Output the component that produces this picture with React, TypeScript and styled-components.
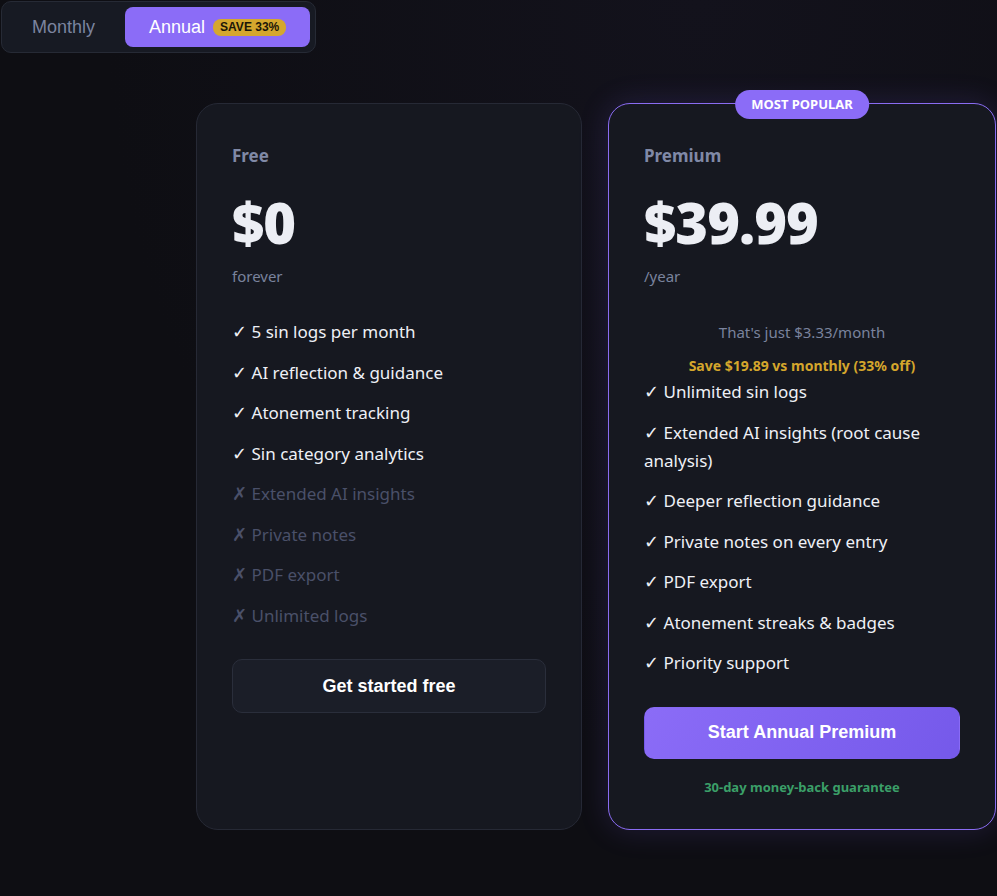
import React from "react";
import styled, { createGlobalStyle } from "styled-components";

const Global = createGlobalStyle`
  html, body { margin: 0; padding: 0; background: #0e0e13; }
  body { font-family: "Noto Sans", "Segoe UI", sans-serif; color: #e8e9f0; }
  * { box-sizing: border-box; }
`;

const Page = styled.div`
  min-height: 896px;
  background: radial-gradient(ellipse at 70% 0%, #13121c 0%, #0e0e13 60%);
  padding: 1px 0 0 1px;
`;

const Toggle = styled.div`
  display: inline-flex;
  align-items: center;
  gap: 8px;
  padding: 5px 5px;
  background: #171a23;
  border: 1px solid #262a35;
  border-radius: 10px;
  height: 52px;
`;

const ToggleBtn = styled.button<{ $active?: boolean }>`
  display: flex;
  align-items: center;
  gap: 8px;
  height: 40px;
  padding: ${(p) => (p.$active ? "0 24px 0 24px" : "0 22px 0 25px")};
  border: none;
  border-radius: 8px;
  font-family: "Liberation Sans", Arial, sans-serif;
  font-size: 18px;
  background: ${(p) => (p.$active ? "#8b6cf7" : "transparent")};
  color: ${(p) => (p.$active ? "#ffffff" : "#7b849f")};
`;

const SaveBadge = styled.span`
  background: #d5a72d;
  color: #1b1608;
  font-size: 12px;
  font-weight: 700;
  border-radius: 8px;
  padding: 2px 7px;
  line-height: 13px;
`;

const Grid = styled.div`
  display: grid;
  grid-template-columns: 386px 388px;
  gap: 26px;
  margin: 50px 0 0 195px;
`;

const Card = styled.div<{ $featured?: boolean }>`
  position: relative;
  height: 727px;
  padding: 40px 35px 0 35px;
  background: #161820;
  border: 1px solid ${(p) => (p.$featured ? "#8a6cf2" : "#262935")};
  border-radius: 22px;
  box-shadow: ${(p) => (p.$featured ? "0 0 30px rgba(124, 92, 240, 0.18)" : "none")};
  display: flex;
  flex-direction: column;
`;

const Popular = styled.div`
  position: absolute;
  top: -14px;
  left: 50%;
  transform: translateX(-50%);
  background: #8b6cf7;
  color: #fff;
  font-weight: 700;
  font-size: 13px;
  padding: 0 16px;
  height: 29px;
  line-height: 29px;
  border-radius: 15px;
  white-space: nowrap;
`;

const PlanName = styled.div`
  font-size: 17px;
  font-weight: 700;
  color: #8089a6;
  line-height: 24px;
`;

const Price = styled.div`
  font-size: 56px;
  font-weight: 900;
  color: #eceef4;
  line-height: 70px;
  margin-top: 19px;
  letter-spacing: -1px;
`;

const Period = styled.div`
  font-size: 15px;
  color: #7a839d;
  line-height: 20px;
  margin-top: 9px;
`;

const Note = styled.div`
  text-align: center;
  font-size: 15px;
  color: #7a839d;
  line-height: 20px;
  margin-top: 36px;
`;

const Save = styled.div`
  text-align: center;
  font-size: 14px;
  font-weight: 700;
  color: #d4a62c;
  line-height: 20px;
  margin-top: 14px;
  margin-bottom: -4px;
`;

const Features = styled.ul<{ $tight?: boolean }>`
  list-style: none;
  margin: ${(p) => (p.$tight ? "0" : "26px")} 0 0 0;
  padding: 0;
`;

const Feature = styled.li<{ $off?: boolean }>`
  font-size: 17px;
  line-height: 28px;
  padding: 6px 0 6.5px;
  color: ${(p) => (p.$off ? "#4a5069" : "#eef0f6")};
`;

const Mark = styled.span`
  font-family: "DejaVu Sans", sans-serif;
  font-size: 18px;
  line-height: 0;
`;

const Button = styled.button<{ $primary?: boolean }>`
  height: ${(p) => (p.$primary ? "52px" : "54px")};
  width: 100%;
  margin-top: 23px;
  border-radius: 10px;
  font-family: "Liberation Sans", Arial, sans-serif;
  font-size: 18px;
  font-weight: 700;
  color: #ffffff;
  border: 1px solid ${(p) => (p.$primary ? "transparent" : "#2a2e3b")};
  background: ${(p) =>
    p.$primary ? "linear-gradient(120deg, #8b6cf7 0%, #7559ea 100%)" : "#1b1e28"};
`;

const Guarantee = styled.div`
  text-align: center;
  font-size: 13px;
  font-weight: 700;
  color: #3b9f68;
  margin-top: 19px;
`;

const freeFeatures: [string, boolean][] = [
  ["5 sin logs per month", true],
  ["AI reflection & guidance", true],
  ["Atonement tracking", true],
  ["Sin category analytics", true],
  ["Extended AI insights", false],
  ["Private notes", false],
  ["PDF export", false],
  ["Unlimited logs", false],
];

const premiumFeatures = [
  "Unlimited sin logs",
  "Extended AI insights (root cause analysis)",
  "Deeper reflection guidance",
  "Private notes on every entry",
  "PDF export",
  "Atonement streaks & badges",
  "Priority support",
];

export default function App() {
  return (
    <Page>
      <Global />
      <Toggle>
        <ToggleBtn>Monthly</ToggleBtn>
        <ToggleBtn $active>
          Annual <SaveBadge>SAVE 33%</SaveBadge>
        </ToggleBtn>
      </Toggle>
      <Grid>
        <Card>
          <PlanName>Free</PlanName>
          <Price>$0</Price>
          <Period>forever</Period>
          <Features>
            {freeFeatures.map(([t, on]) => (
              <Feature key={t} $off={!on}>
                <Mark>{on ? "✓" : "✗"}</Mark> {t}
              </Feature>
            ))}
          </Features>
          <Button>Get started free</Button>
        </Card>
        <Card $featured>
          <Popular>MOST POPULAR</Popular>
          <PlanName>Premium</PlanName>
          <Price>$39.99</Price>
          <Period>/year</Period>
          <Note>That's just $3.33/month</Note>
          <Save>Save $19.89 vs monthly (33% off)</Save>
          <Features $tight>
            {premiumFeatures.map((t) => (
              <Feature key={t}>
                <Mark>✓</Mark> {t}
              </Feature>
            ))}
          </Features>
          <Button $primary>Start Annual Premium</Button>
          <Guarantee>30-day money-back guarantee</Guarantee>
        </Card>
      </Grid>
    </Page>
  );
}
